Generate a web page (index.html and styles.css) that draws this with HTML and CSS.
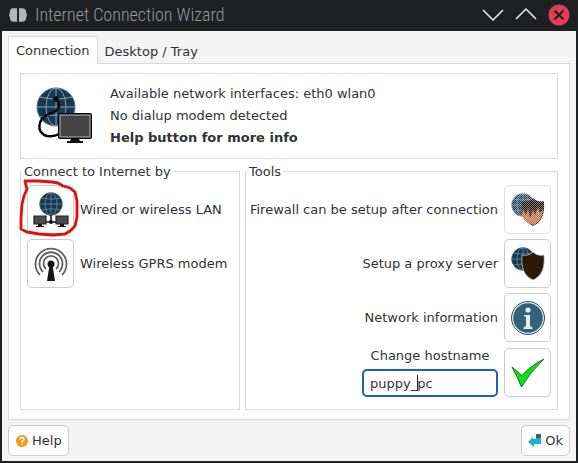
FILE: index.html
```html
<!DOCTYPE html>
<html lang="en">
<head>
<meta charset="utf-8">
<title>Internet Connection Wizard</title>
<link rel="stylesheet" href="styles.css">
</head>
<body>
<svg class="defs" aria-hidden="true">
  <defs>
    <g id="globe">
      <circle cx="20" cy="20" r="19" fill="#17394f" stroke="#4f7186" stroke-width="1"/>
      <g fill="none" stroke="#83a4b8" stroke-width="1">
        <path d="M20 1V39M1 20H39M4 10Q20 14 36 10M4 30Q20 26 36 30"/>
        <ellipse cx="20" cy="20" rx="10" ry="19"/>
      </g>
    </g>
    <path id="shield" d="M12 0C9 3 5 4 1 3C0 16 3 24 12 28C21 24 24 16 23 3C19 4 15 3 12 0Z"/>
    <pattern id="dots" width="2" height="2" patternUnits="userSpaceOnUse">
      <path d="M0 0h1v1H0zM1 1h1v1H1z" fill="#fff"/>
    </pattern>
  </defs>
</svg>
<div class="window">
  <header class="titlebar">
    <svg class="app-icon" viewBox="0 0 20 16" aria-hidden="true"><path d="M8.500 1H4Q1 1 1 5L0 8L1 11Q1 15 4 15H8.500ZM10.500 1H14Q18 1 18 5L19 8L18 11Q18 15 14 15H10.500Z" fill="#b4b5b5"/></svg>
    <h1>Internet Connection Wizard</h1>
    <button class="win-btn" aria-label="Minimize"><svg viewBox="0 0 22 22"><path d="M1 6L11 16L21 6" fill="none" stroke="#eee" stroke-width="1.500"/></svg></button>
    <button class="win-btn" aria-label="Maximize"><svg viewBox="0 0 22 22"><path d="M1 15L11 5L21 15" fill="none" stroke="#eee" stroke-width="1.500"/></svg></button>
    <button class="win-btn" aria-label="Close"><svg viewBox="0 0 22 22"><circle cx="11" cy="11" r="10.500" fill="#e04054"/><path d="M6.500 6.500L15.500 15.500M15.500 6.500L6.500 15.500" stroke="#1e2022" stroke-width="2"/></svg></button>
  </header>
  <main class="content">
    <nav class="tabs" role="tablist">
      <button class="tab active" role="tab" aria-selected="true">Connection</button>
      <button class="tab" role="tab" aria-selected="false">Desktop / Tray</button>
    </nav>
    <section class="panel" role="tabpanel">
      <div class="info">
        <svg class="info-icon" viewBox="0 0 58 58" aria-hidden="true">
          <use href="#globe"/>
          <path d="M20 12C28 20 19 25 13 27C1 32 0 46 11 49Q18 50 23 47" fill="none" stroke="#090909" stroke-width="2.500"/>
          <circle cx="20" cy="12" r="2.800" fill="#090909"/>
          <rect x="22" y="26" width="34" height="26" rx="2" fill="#050505"/>
          <rect x="24" y="28" width="30" height="22" fill="#444" stroke="#bbb" stroke-width="1"/>
          <path d="M35 52H43L44 54H47V56H31V54H34Z" fill="#111"/>
        </svg>
        <div class="info-text">
          <p>Available network interfaces: eth0 wlan0</p>
          <p>No dialup modem detected</p>
          <p><strong>Help button for more info</strong></p>
        </div>
      </div>
      <div class="columns">
        <fieldset>
          <legend>Connect to Internet by</legend>
          <div class="row">
            <div class="marked">
              <button class="tile" id="lan" aria-labelledby="lan-label"><svg viewBox="0 0 40 40" aria-hidden="true">
                <use href="#globe" transform="translate(8 2) scale(.600)"/>
                <path d="M20 25V33M12 32H28" stroke="#111" stroke-width="1.500"/><circle cx="20" cy="32" r="2" fill="#111"/>
                <path d="M3 26H15V34H3ZM25 26H37V34H25Z" fill="#4c4c4c" stroke="#222" stroke-width="1.200"/>
                <path d="M7 34H11V36H13V37H5V36H7ZM29 34H33V36H35V37H27V36H29Z" fill="#111"/>
              </svg></button>
              <svg class="mark" viewBox="0 0 62 60" aria-hidden="true"><path d="M6 3L6 2L19 2L33 3L39 4L44 7L51 9L56 13L58 22L58 28L58 38L56 47L51 52L46 55L34 56L20 55L8 53L2 50L2 39L3 25L5 17L8 10L6 3" fill="none" stroke="#e00e12" stroke-width="2.800" stroke-linejoin="round"/></svg>
            </div>
            <label id="lan-label" for="lan">Wired or wireless LAN</label>
          </div>
          <div class="row">
            <button class="tile" id="gprs" aria-labelledby="gprs-label"><svg viewBox="0 0 40 40" aria-hidden="true">
              <g fill="none" stroke="#606060" stroke-width="1.800">
                <path d="M9 31A15.500 15.500 0 1 1 31 31"/>
                <path d="M12 28A11.500 11.500 0 1 1 28 28"/>
                <path d="M15 25A7.500 7.500 0 1 1 25 25"/>
              </g>
              <circle cx="20" cy="20" r="3.500" fill="#151515"/><path d="M18.500 21H21.500L24 37H16Z" fill="#151515"/>
            </svg></button>
            <label id="gprs-label" for="gprs">Wireless GPRS modem</label>
          </div>
        </fieldset>
        <fieldset class="tools">
          <legend>Tools</legend>
          <div class="row">
            <label id="fw-label" for="fw">Firewall can be setup after connection</label>
            <button class="tile muted" id="fw" aria-labelledby="fw-label" disabled><svg viewBox="0 0 40 40" aria-hidden="true">
              <use href="#globe" transform="translate(3 3) scale(.600)"/>
              <use href="#shield" transform="translate(13 8)" fill="#1d130c"/>
              <path d="M14 26L15 19L18 25L20 18L22 28L25 20L27 25L30 17L32 23L35 19Q34 32 25 35Q16 32 14 26Z" fill="#c0703a"/>
              <path d="M3 3H38V39H3Z" fill="url(#dots)" opacity=".450"/>
            </svg></button>
          </div>
          <div class="row">
            <label id="proxy-label" for="proxy">Setup a proxy server</label>
            <button class="tile" id="proxy" aria-labelledby="proxy-label"><svg viewBox="0 0 40 40" aria-hidden="true">
              <use href="#globe" transform="translate(3 3) scale(.600)"/>
              <use href="#shield" transform="translate(13 8)" fill="#2a1b08" stroke="#ccc" stroke-width=".700"/>
            </svg></button>
          </div>
          <div class="row">
            <label id="net-label" for="net">Network information</label>
            <button class="tile" id="net" aria-labelledby="net-label"><svg viewBox="0 0 40 40" aria-hidden="true">
              <circle cx="20" cy="20" r="16.500" fill="#e0e8eb" stroke="#2d5265" stroke-width="1"/><circle cx="20" cy="20" r="14.800" fill="#356179"/>
              <circle cx="20" cy="12" r="2.600" fill="#e4edf2"/><path d="M16 17H22V28L24.500 29.500V31H15.500V29.500L18 28V19L16 18Z" fill="#e4edf2"/>
            </svg></button>
          </div>
          <div class="row">
            <div class="host">
              <label for="hostname">Change hostname</label>
              <div class="entry"><input id="hostname" type="text" value="puppy_pc"><span class="caret"></span></div>
            </div>
            <button class="tile" aria-label="Set hostname"><svg viewBox="0 0 40 40" aria-hidden="true"><path d="M4 15L14 23.500Q22 14 36 7Q22 20 13.500 35Q9 24 4 15Z" fill="#05e515" stroke="#236b20" stroke-width="1"/></svg></button>
          </div>
        </fieldset>
      </div>
    </section>
    <footer class="actions">
      <button class="action"><svg viewBox="0 0 14 14" aria-hidden="true"><circle cx="7" cy="7" r="6" fill="#f59a13"/><path d="M5 5.500Q5 3.500 7 3.500T9 5.500Q9 6.500 7 7.500V8.500M7 9.500V11" fill="none" stroke="#fff" stroke-width="1.500"/></svg>Help</button>
      <button class="action"><svg viewBox="0 0 14 14" aria-hidden="true"><path d="M8 0H13V10H6V13L0 8L5 3V5H8Z" fill="#13b5cf"/><path d="M8 0H13V4H8Z" fill="#45606d"/></svg>Ok</button>
    </footer>
  </main>
</div>
</body>
</html>
```

FILE: styles.css
```css
* { box-sizing: border-box; }
body {
  margin: 0;
  font: 13px/17px "DejaVu Sans", sans-serif;
  color: #303334;
  background: #1e2022;
}
button, input { font: inherit; color: inherit; }
p, h1 { margin: 0; }
svg { display: block; }
.defs { position: absolute; width: 0; height: 0; }
.window {
  display: flex;
  flex-direction: column;
  min-height: 100vh;
  padding: 0 2px 2px;
}
.titlebar {
  display: flex;
  align-items: center;
  gap: 11px;
  height: 31px;
  padding: 0 6px 2px 7px;
}
.app-icon { width: 19px; height: 16px; }
.titlebar h1 {
  flex: 1;
  margin-left: -4px;
  font: 300 18px/22px "Roboto Condensed", Roboto, sans-serif;
  color: #97999a;
}
.win-btn {
  width: 22px;
  height: 22px;
  padding: 0;
  border: 0;
  background: none;
}
.content {
  flex: 1;
  display: flex;
  flex-direction: column;
  padding: 5px 6px;
  background: #f4f4f4;
}
.tabs { display: flex; }
.tab {
  height: 27px;
  padding: 3px 7px 0;
  border: 0;
  background: none;
}
.tab.active {
  position: relative;
  margin-bottom: -1px;
  height: 28px;
  padding-top: 0;
  border: 1px solid #d9d9d9;
  border-bottom: 0;
  background: #fff;
}
.panel {
  flex: 1;
  display: flex;
  flex-direction: column;
  gap: 4px;
  padding: 9px 11px;
  border: 1px solid #d9d9d9;
  background: #fff;
}
.info {
  display: flex;
  align-items: center;
  gap: 16px;
  padding: 9px 15px;
  border: 1px solid #d9d9d9;
}
.info-icon { width: 58px; height: 58px; }
.info-text { line-height: 22px; }
.columns {
  flex: 1;
  display: grid;
  grid-template-columns: 220fr 313fr;
  gap: 5px;
}
fieldset {
  min-width: 0;
  margin: 0;
  padding: 5px 6px 11px;
  border: 1px solid #d9d9d9;
}
legend { margin-left: -5px; padding: 0 2px; }
.row {
  display: flex;
  align-items: center;
  gap: 6px;
  white-space: nowrap;
}
.row + .row { margin-top: 5px; }
.tools .row { justify-content: flex-end; }
.tile {
  display: grid;
  place-items: center;
  flex: none;
  width: 47px;
  height: 49px;
  padding: 0;
  border: 1px solid #cbcbcb;
  border-radius: 5px;
  background: #fff;
}
.tile svg { width: 40px; height: 40px; }
.tile.muted { border-color: #dedede; }
.marked { position: relative; }
.marked .mark {
  position: absolute;
  top: -6px;
  left: -8px;
  width: 62px;
  height: 60px;
  pointer-events: none;
}
.host {
  display: flex;
  flex-direction: column;
  align-items: center;
  gap: 5px;
}
.entry { position: relative; }
.entry input {
  display: block;
  width: 136px;
  height: 28px;
  padding: 0 6px;
  border: 2px solid #1c60cb;
  border-radius: 5px;
  background: #fff;
}
.caret {
  position: absolute;
  top: 6px;
  left: 55px;
  width: 1px;
  height: 16px;
  background: #222;
}
.actions {
  display: flex;
  justify-content: space-between;
  padding-top: 5px;
}
.action {
  display: flex;
  align-items: center;
  gap: 3px;
  height: 31px;
  padding: 0 6px;
  border: 1px solid #cbcbcb;
  border-radius: 5px;
  background: #fff;
}
.action svg { width: 14px; height: 14px; }
```
